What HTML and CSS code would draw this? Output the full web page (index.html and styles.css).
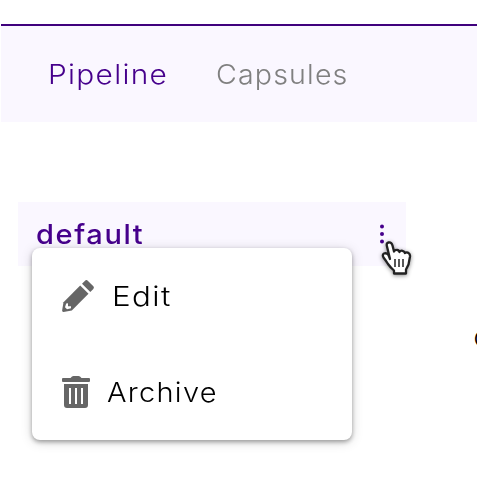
FILE: index.html
```html
<!DOCTYPE html>
<html lang="en">
<head>
<meta charset="utf-8">
<title>Pipeline</title>
<link rel="stylesheet" href="styles.css">
</head>
<body>
<nav class="tabs">
  <a class="tab active">Pipeline</a>
  <a class="tab capsules">Capsules</a>
</nav>
<main class="content">
  <section class="group">
    <h2 class="name">default</h2>
    <svg class="dots" width="6" height="22" viewBox="0 0 6 22"><circle cx="3" cy="3.5" r="2"/><circle cx="3" cy="11" r="2"/><circle cx="3" cy="18.5" r="2"/></svg>
    <div class="menu">
      <div class="item">
        <svg class="icon" width="32" height="32" viewBox="0 0 32 32"><path d="M18.2 5.500l8.300 8.300L9.800 30.500l-8.300 1.400Q0 32 .1 30.500l1.400-8.300z"/><path d="M20 3.700l2.800-2.800q1.600-1.600 3.200 0l5.100 5.100q1.600 1.600 0 3.200L28.300 12z"/><path class="tip" d="M4.200 23.500L6 23.300v3h3v2l-4 1-2-2z"/></svg>
        <span class="edit">Edit</span>
      </div>
      <div class="item">
        <svg class="icon" width="28" height="32" viewBox="0 0 28 32"><path d="M1 2h7.500L10 .5Q10.600 0 11.500 0h5q.9 0 1.500 .5L19.500 2H27q1 0 1 1v2q0 1-1 1H1Q0 6 0 5V3q0-1 1-1z"/><path fill-rule="evenodd" d="M2 8h24v21q0 3-3 3H5q-3 0-3-3zM7 12v16h2V12zM13 12v16h2V12zM19 12v16h2V12z"/></svg>
        <span class="archive">Archive</span>
      </div>
    </div>
    <svg class="cursor" width="36" height="38" viewBox="0 0 36 38"><path d="M11 20L8 7.500Q7 4 9.500 3.500q3-.5 4 3l1.500 6q1-2 3-1.500 2.200 .2 2.500 2 1-1.700 3-1.200 2.200 .5 2.400 2.200 2-1.200 3.600 0 1.800 1.200 1.500 3.500l-1.500 8-2.500 5v4H15v-3q-3.500-3-6-6.500-1.500-2.500-4.500-6.500-1.500-3 .5-4 2.500-1 4.500 1.500z"/><path class="lines" d="M16 20v8M20 20v8M24 20v8"/></svg>
  </section>
  <span class="cut">o</span>
</main>
</body>
</html>
```

FILE: styles.css
```css
* { box-sizing: border-box; }
body {
  margin: 0;
  padding-top: 24px;
  height: 497px;
  overflow: hidden;
  background: #fff;
  font: 300 27.5px/34px Inter, "Open Sans", sans-serif;
  color: #000;
}
.tabs {
  display: flex;
  height: 98px;
  margin-left: 1px;
  padding: 31px 0 0 47px;
  border-top: 2px solid #3f007d;
  background: #faf7ff;
}
.tab { width: 168px; color: #808080; letter-spacing: 1.1px; transform: scaleX(1.04); transform-origin: 0 0; }
.active { color: #46008c; letter-spacing: 1.2px; transform: scaleX(1.085); }
.content { display: flex; padding: 80px 0 0 18px; }
.group {
  position: relative;
  display: flex;
  justify-content: space-between;
  flex: 0 0 388px;
  height: 64px;
  padding: 15px 21px 0 18px;
  background: #faf7ff;
}
.name { margin: 1px 0 0; font-size: 27px; font-weight: 500; letter-spacing: 1.5px; color: #46008c; transform: scaleX(1.075); transform-origin: 0 0; }
.dots { margin-top: 6px; fill: #46008c; }
.menu {
  position: absolute;
  left: 14px;
  top: 46px;
  width: 320px;
  height: 192px;
  border-radius: 8px;
  background: #fff;
  box-shadow: 0 2px 4px rgba(0,0,0,.32), 0 2px 12px rgba(0,0,0,.17);
}
.item { display: flex; align-items: center; height: 96px; padding-left: 30px; }
.icon { flex: none; fill: #666; }
.tip { fill: #fff; }
.edit { margin-left: 18px; letter-spacing: 1.2px; transform: scaleX(1.14); transform-origin: 0 0; }
.archive { margin-left: 17px; letter-spacing: 1.2px; transform: scaleX(1.055); transform-origin: 0 0; }
.cursor { position: absolute; left: 361px; top: 37px; fill: #fff; stroke: #222; stroke-width: 2.3; stroke-linejoin: round; filter: drop-shadow(0 1px 2px rgba(0,0,0,.45)); }
.cursor .lines { stroke-width: 1.5; }
.cut { margin: 117px 0 0 67.5px; }
```
